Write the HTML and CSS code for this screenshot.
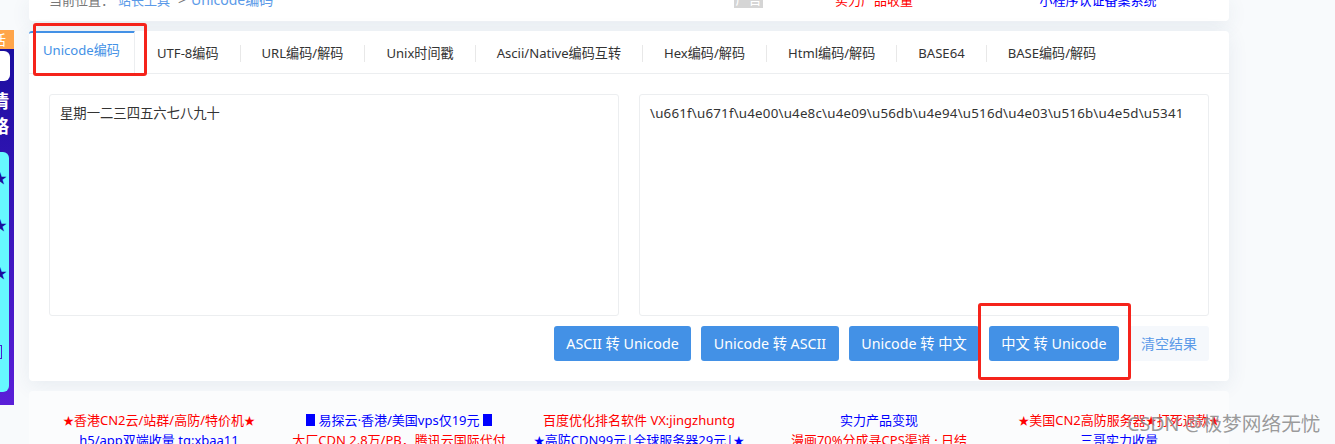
FILE: index.html
```html
<!DOCTYPE html>
<html lang="zh-CN">
<head>
  <meta charset="UTF-8" />
  <meta name="viewport" content="width=device-width, initial-scale=1.0"/>
  <title>Unicode编码</title>
  <link rel="stylesheet" href="styles.css">
</head>
<body>
  <div class="side-ad">
    <div class="side-ad-top">活</div>
    <div class="side-ad-white"></div>
    <div class="side-ad-title">情<br>略</div>
    <div class="side-ad-panel">
      <span class="side-star">★</span>
      <span class="side-star">★</span>
      <span class="side-star">★</span>
      <span class="side-box"></span>
    </div>
  </div>

  <div class="page">
    <div class="card crumb-card">
      <div class="crumb">
        <span class="crumb-label">当前位置：</span>
        <a class="crumb-link">站长工具</a>
        <span class="crumb-sep">&gt;</span>
        <a class="crumb-link crumb-now">Unicode编码</a>
      </div>
      <span class="ad-tag">广告</span>
      <a class="top-link red">实力产品收量</a>
      <a class="top-link blue">小程序认证备案系统</a>
    </div>

    <div class="card tool-card">
      <ul class="tabs">
        <li class="tab active">Unicode编码</li>
        <li class="tab">UTF-8编码</li>
        <li class="tab">URL编码/解码</li>
        <li class="tab">Unix时间戳</li>
        <li class="tab">Ascii/Native编码互转</li>
        <li class="tab">Hex编码/解码</li>
        <li class="tab">Html编码/解码</li>
        <li class="tab">BASE64</li>
        <li class="tab last">BASE编码/解码</li>
      </ul>
      <div class="panes">
        <textarea class="box">星期一二三四五六七八九十</textarea>
        <textarea class="box box-code">\u661f\u671f\u4e00\u4e8c\u4e09\u56db\u4e94\u516d\u4e03\u516b\u4e5d\u5341</textarea>
      </div>
      <div class="actions">
        <button class="btn btn-a">ASCII 转 Unicode</button>
        <button class="btn btn-b">Unicode 转 ASCII</button>
        <button class="btn btn-c">Unicode 转 中文</button>
        <button class="btn btn-c">中文 转 Unicode</button>
        <button class="btn btn-light">清空结果</button>
      </div>
    </div>

    <div class="card links-card">
      <div class="links">
        <a class="red"><i class="star">★</i>香港CN2云/站群/高防/特价机<i class="star">★</i></a>
        <a class="blue"><i class="block"></i> 易探云·香港/美国vps仅19元 <i class="block"></i></a>
        <a class="red">百度优化排名软件 VX:jingzhuntg</a>
        <a class="blue">实力产品变现</a>
        <a class="red"><i class="star">★</i>美国CN2高防服务器<i class="star">★</i>打死退款<i class="star">★</i></a>
        <a class="blue">h5/app双端收量 tg:xbaa11</a>
        <a class="red">大厂CDN 2.8万/PB，腾讯云国际代付</a>
        <a class="blue"><i class="star">★</i>高防CDN99元|全球服务器29元|<i class="star">★</i></a>
        <a class="red">漫画70%分成寻CPS渠道 · 日结</a>
        <a class="blue">三哥实力收量</a>
      </div>
    </div>
  </div>

  <div class="mark mark-tab"></div>
  <div class="mark mark-btn"></div>
  <div class="watermark">CSDN @极梦网络无忧</div>
</body>
</html>
```

FILE: styles.css
```css
* {
  box-sizing: border-box;
}

html, body {
  margin: 0;
  height: 444px;
  overflow: hidden;
}

body {
  position: relative;
  background: #f8fafc;
  font-family: "Noto Sans", "Noto Sans CJK SC", sans-serif;
  font-size: 13px;
  color: #333;
}

.red {
  color: #f00;
}

.blue {
  color: #00f;
}

.page {
  width: 1200px;
  height: 444px;
  margin-left: 29px;
}

.card {
  background: #fff;
  border-radius: 4px;
  box-shadow: 0 4px 20px rgba(60, 90, 120, 0.09);
}

/* top bar, cut off by the window */
.crumb-card {
  display: flex;
  align-items: flex-end;
  height: 21px;
  padding: 0 0 12px 20px;
  overflow: hidden;
  font-size: 13px;
  line-height: 18px;
  border-radius: 0 0 4px 4px;
}

.crumb {
  display: flex;
  width: 685px;
  flex: none;
}

.crumb-label {
  color: #777;
  width: 69px;
}

.crumb-link {
  color: #5b9ae8;
}

.crumb-now {
  font-size: 14px;
}

.crumb-sep {
  color: #777;
  font-size: 14px;
  margin: 0 5px 0 8px;
}

.ad-tag {
  flex: none;
  width: 29px;
  margin-bottom: 1px;
  background: #d5d5d5;
  color: #fff;
  text-align: center;
}

.top-link {
  flex: none;
  text-align: center;
}

.top-link.red {
  width: 222px;
}

.top-link.blue {
  width: 226px;
}

/* tool */
.tool-card {
  height: 350px;
  margin-top: 10px;
}

.tabs {
  display: flex;
  height: 43px;
  margin: 0;
  padding: 0;
  list-style: none;
  font-size: 13.1px;
  border-bottom: 1px solid #eceef0;
}

.tab {
  height: 17px;
  margin-top: 14px;
  padding: 0 21px;
  line-height: 17px;
  white-space: nowrap;
  border-right: 1px solid #e8e8e8;
}

.tab.active {
  width: 106px;
  height: 42px;
  margin: 0 1px 0 0;
  padding: 9px 0 0 14px;
  color: #4391e6;
  border-top: 2px solid #4391e6;
  border-right: 1px solid #eceef0;
  border-radius: 3px 0 0 0;
}

.tab.last {
  border-right: 0;
}

.panes {
  display: flex;
  gap: 20px;
  padding: 20px 20px 0;
}

.box {
  display: block;
  width: 570px;
  height: 222px;
  padding: 8px 10px;
  border: 1px solid #eceef0;
  border-radius: 3px;
  outline: 0;
  resize: none;
  font: inherit;
  font-size: 13.33px;
  line-height: 20px;
  color: #333;
  background: #fff;
}

.box-code {
  letter-spacing: 0.2px;
}

.actions {
  display: flex;
  justify-content: flex-end;
  gap: 10px;
  padding: 10px 20px 0;
}

.btn {
  height: 35px;
  padding: 0 0 2px;
  border: 0;
  border-radius: 3px;
  background: #4391e6;
  color: #fff;
  font: inherit;
  font-size: 14.25px;
  white-space: nowrap;
}

.btn-a {
  width: 137px;
}

.btn-b {
  width: 138px;
}

.btn-c {
  width: 130px;
}

.btn-light {
  width: 80px;
  background: #f5f8fc;
  color: #5b9ae8;
  font-size: 14px;
}

/* ad links */
.links-card {
  height: 53px;
  margin-top: 10px;
  padding-top: 20px;
  overflow: hidden;
  border-radius: 4px 4px 0 0;
  box-shadow: none;
  background: #fbfcfd;
}

.links {
  display: grid;
  grid-template-columns: repeat(5, 240px);
  margin-left: 10px;
  text-align: center;
  line-height: 19.5px;
  white-space: nowrap;
}

.star {
  font-style: normal;
  font-size: 11px;
}

.block {
  display: inline-block;
  width: 9px;
  height: 12px;
  background: #00f;
  vertical-align: -1px;
}

/* fixed ad at the window's left edge */
.side-ad {
  position: absolute;
  left: 0;
  top: 30px;
  width: 14px;
  height: 375px;
  overflow: hidden;
  background: linear-gradient(#170d9c, #5a1fd8);
}

.side-ad-top {
  height: 19px;
  background: #ffa54a;
  color: #fff;
  font-size: 14px;
  line-height: 19px;
  text-indent: -8px;
}

.side-ad-white {
  position: absolute;
  left: -10px;
  top: 21px;
  width: 20px;
  height: 30px;
  background: #fff;
  border-radius: 6px;
}

.side-ad-title {
  position: absolute;
  left: -9px;
  top: 59px;
  color: #fff;
  font-size: 18px;
  font-weight: 700;
  line-height: 25px;
}

.side-ad-panel {
  position: absolute;
  left: -20px;
  top: 122px;
  width: 29px;
  height: 240px;
  background: #66f8ff;
  border-radius: 6px;
}

.side-star {
  position: absolute;
  left: 13px;
  color: #1c0f9c;
  font-size: 14px;
  line-height: 14px;
}

.side-star:nth-child(1) {
  top: 19px;
}

.side-star:nth-child(2) {
  top: 66px;
}

.side-star:nth-child(3) {
  top: 114px;
}

.side-box {
  position: absolute;
  left: 14px;
  top: 193px;
  width: 8px;
  height: 14px;
  border: 1px solid #4a1fd0;
}

/* red marks drawn over the screenshot */
.mark {
  position: absolute;
  border: 3px solid #f5231b;
  border-radius: 3px;
}

.mark-tab {
  left: 33px;
  top: 23px;
  width: 114px;
  height: 53px;
}

.mark-btn {
  left: 978px;
  top: 303px;
  width: 153px;
  height: 77px;
}

.watermark {
  position: absolute;
  left: 1127px;
  top: 410px;
  color: rgba(110, 110, 110, 0.7);
  font-size: 19.7px;
  line-height: 28px;
  white-space: nowrap;
  text-shadow: 0 0 1px rgba(255, 255, 255, 0.6);
}
```
